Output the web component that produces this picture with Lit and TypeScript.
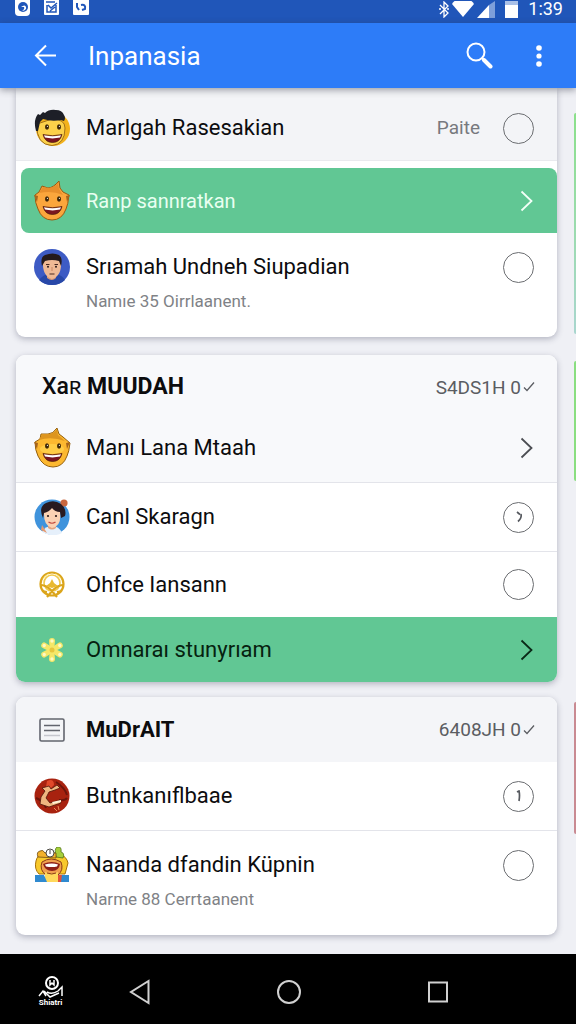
import { LitElement, html, svg, css, nothing, TemplateResult } from "lit";
import { customElement, property } from "lit/decorators.js";

const grin = svg`
  <ellipse cx="13" cy="18" rx="2" ry="2.700" fill="#3b2508"/>
  <ellipse cx="25" cy="18" rx="2" ry="2.700" fill="#3b2508"/>
  <circle cx="13.400" cy="17.300" r=".6" fill="#fff"/>
  <circle cx="25.400" cy="17.300" r=".6" fill="#fff"/>
  <path d="M9 25.500q9.500 2.500 19 0q-2 8-9.500 8t-9.500-8z" fill="#7a1620" stroke="#4a1a08" stroke-width=".7"/>
  <path d="M10 26.200q8.500 2 17 0l-1 2.400q-7.500 1.600-15 0z" fill="#fff"/>`;

const avatars: Record<string, TemplateResult> = {
  boy: html`<svg viewBox="0 0 36 38" width="36" height="38" aria-hidden="true">
    <circle cx="19" cy="20" r="17" fill="#f3b21c"/>
    <path d="M3 15q-1 21 15 21.500q13-1 13-17.500q0-9-13-9z" fill="#fcd14a" stroke="#8a5a10" stroke-width=".8"/>
    <path d="M2 22Q-1 11 4 5l2 1l3-3l2 1q4-4 11-3q6 0 8 5q2 3 0 6l-3-1q-9 2-18-1l-3 3l-2 9z" fill="#1d1f27"/>
    ${grin}</svg>`,
  amber: html`<svg viewBox="0 0 36 40" width="38" height="40" aria-hidden="true">
    <path d="M1 14l4-3l3-6l6 2q5 0 11-7l1 7l3 4l6 3q-1 10-3 14q-4 11-14 11T4 28Q1 22 1 14z" fill="#fba63c" stroke="#9b5a12" stroke-width="1"/>
    <path d="M5 12l4-6l6 1q6-1 9-5l1 6l4 6q-11-5-24-2z" fill="#e88f2c"/>
    <path d="M0 14l4 1l-1 6zM36 14l-4 1l1 6z" fill="#a7641c"/>
    ${grin}</svg>`,
  yellow: html`<svg viewBox="0 0 36 40" width="38" height="40" aria-hidden="true">
    <path d="M1 14l5-3l1-5l7 0q5 0 9-6l2 6l4 3l7 6q-1 9-3 13q-4 11-14 11T4 28Q1 22 1 14z" fill="#fcb830" stroke="#94600f" stroke-width="1"/>
    <path d="M5 12l3-6l6 0q6 0 9-5l1 6l7 6q-14-5-26-1z" fill="#dd951f"/>
    <path d="M0 14l4 1l-1 6zM36 14l-4 1l1 6z" fill="#a7641c"/>
    <ellipse cx="18" cy="21" rx="12" ry="5" fill="#ffcc45"/>
    ${grin}</svg>`,
  man: html`<svg viewBox="0 0 36 36" width="36" height="36" aria-hidden="true">
    <circle cx="18" cy="18" r="18" fill="#3d5bc4"/>
    <path d="M5 31q4-5 9-6h8q6 1 9 6q-5 5-13 5T5 31z" fill="#2848a8"/>
    <path d="M13 23h9v6q-4 4-9 0z" fill="#d99a78"/>
    <path d="M9 12q0-5 9-5t9 5q1 15-9 18Q8 27 9 12z" fill="#efb995"/>
    <path d="M8 17q-2-9 3-11q8-3 14 0q4 3 2 11l-2-5q-7-2-14 0z" fill="#241a1c"/>
    <path d="M12 15.500h3.500M20.500 15.500h3.500M15.500 25h5" stroke="#4a2a22" stroke-width="1.200"/>
    <circle cx="14" cy="17.700" r="1" fill="#2a1a1a"/><circle cx="22" cy="17.700" r="1" fill="#2a1a1a"/>
    <path d="M18 18v4" stroke="#c98765"/></svg>`,
  woman: html`<svg viewBox="0 0 36 36" width="36" height="36" aria-hidden="true">
    <circle cx="18" cy="18" r="17.500" fill="#3f93dc"/>
    <circle cx="30" cy="4" r="3.600" fill="#c9673f"/>
    <path d="M8 33q3-6 10-6t10 7q-9 5-20-1z" fill="#e6f0fb"/>
    <path d="M8 26l5 8l-6-3z" fill="#e59a70"/>
    <path d="M14 23h8v6q-4 3-8 0z" fill="#e2a37e"/>
    <path d="M10 12q8-7 16 0q2 15-8 17Q9 27 10 12z" fill="#fbd2b4"/>
    <path d="M9 19Q4 8 12 4q8-4 15 1q6 5 4 12l-4 2l-1-6q-5 0-8-4q-3 4-8 5z" fill="#281a20"/>
    <circle cx="14" cy="17" r="1.100" fill="#2a1a1a"/><circle cx="22" cy="17" r="1.100" fill="#2a1a1a"/>
    <path d="M14.500 23q3.500 2.500 7 0" stroke="#c2483c" fill="none" stroke-width="1.200"/></svg>`,
  emblem: html`<svg viewBox="0 0 28 28" width="28" height="28" aria-hidden="true">
    <g fill="none" stroke="#dba51b" stroke-width="2.200">
      <circle cx="14" cy="13" r="11.500"/>
      <circle cx="14" cy="12" r="8" stroke="#f0c94c" stroke-width="1.600"/>
      <path d="M2 14q6 0 11 5l6 7M26 14q-6 0-11 5l-6 7M4 20l5 1M24 20l-5 1"/></g>
    <path d="M14 8l2 4l4 3l-6 2l-6-2l4-3z" fill="#e9b92f"/>
    <path d="M5 8q2-4 6-5M23 8q-2-4-6-5" stroke="#fff0a0" fill="none"/></svg>`,
  flower: html`<svg viewBox="0 0 24 24" width="24" height="24" aria-hidden="true">
    ${[0, 60, 120, 180, 240, 300].map(a => svg`<g transform="rotate(${a} 12 12)">
      <path d="M12 13L9.500 8L9 3q0-3 3-3t3 3l-.5 5z" fill="#f6e768"/><circle cx="12" cy="3" r="1.700" fill="#fff9c4"/></g>`)}
    <circle cx="12" cy="12" r="2.500" fill="#e9c63d"/></svg>`,
  dancer: html`<svg viewBox="0 0 36 36" width="36" height="36" aria-hidden="true">
    <circle cx="18" cy="18" r="17.500" fill="#a8220f"/>
    <path d="M2 20q8 3 10 10M22 4q9 6 11 13M25 22q6 1 8-2" stroke="#6d150b" fill="none" stroke-width="2"/>
    <path d="M13 3q7-3 7 4l-3 3l-5-1z" fill="#e0492a"/>
    <path d="M8 10l7-2l2 3l6-4l3 3l-5 2l-6 2l-3 6l4 5l10-3l1 3l-12 4l-9-3l1-7l4-6z" fill="#efb680" stroke="#4e140a" stroke-width=".8"/>
    <path d="M18 24l9-2v2l-8 2z" fill="#fff2d8"/><path d="M20 30l3 3m1-5l1 4" stroke="#ef8a5a"/></svg>`,
  mascot: html`<svg viewBox="0 0 36 36" width="36" height="36" aria-hidden="true">
    <path d="M2 14Q3 8 10 6h15q8 4 9 10l-3 11H5Q0 22 2 14z" fill="#f8c92c" stroke="#a77008" stroke-width="1"/>
    <path d="M22 10q-2-8 1-10q5-1 4 5q4 1 2 6z" fill="#a6cf3a" stroke="#50731c" stroke-width=".8"/>
    <path d="M4 10q-2-5 2-6q3-2 5 2l11 0v5z" fill="#f3b12b" stroke="#6d4a10" stroke-width=".8"/>
    <circle cx="16" cy="6" r="4" fill="#fff" stroke="#4c4a44" stroke-width="1"/><path d="M16 3v4" stroke="#444"/>
    <path d="M8 15q9-6 19 0q3 8-3 13H12Q5 23 8 15z" fill="#f0a04e" stroke="#8b3a16" stroke-width="1"/>
    <path d="M9 17q9-4 17 0q-1 7-8 7T9 17z" fill="#8e2018"/><path d="M11 17.500q7-2 13 0l-1 2q-5 1-11 0z" fill="#fff"/>
    <path d="M11 25q7 3 13 0v10H11z" fill="#ffd95c"/><path d="M13 26q5 2 9 0" stroke="#8b3a16" fill="none"/>
    <path d="M1 28h9l3 7H1z" fill="#2f8ad0"/><path d="M27 28h8v7H24z" fill="#2f8ad0"/><path d="M24 28h4l-1 7h-3z" fill="#e0513a"/></svg>`,
  list: html`<svg viewBox="0 0 26 24" width="26" height="24" aria-hidden="true">
    <rect x="1" y="1" width="24" height="22" rx="1.500" fill="none" stroke="#62656e" stroke-width="1.600"/>
    <path d="M5 7.500h16M5 12.500h16" stroke="#62656e" stroke-width="1.700"/><path d="M5 17.500h16" stroke="#c5c7ce" stroke-width="1.500"/></svg>`,
};

const check = html`<svg viewBox="0 0 12 12" width="12" height="12" aria-hidden="true"><path d="M1 6.500l3 3l7-8" fill="none" stroke="currentColor" stroke-width="1.300"/></svg>`;

@customElement("list-row")
class ListRow extends LitElement {
  @property() avatar = "";
  @property() name = "";
  @property() sub = "";
  @property() note = "";
  @property() action: "pick" | "open" | "hint" | "one" = "pick";

  static styles = css`
    :host { display: block; color: #0c0c0e; }
    .row {
      display: grid; grid-template-columns: 36px 1fr auto; column-gap: 16px; align-items: center;
      box-sizing: border-box; width: 100%; min-height: var(--row-height, 65px); padding: 0 23px 0 var(--row-left, 18px);
      color: inherit; text-decoration: none; font-size: var(--row-text, 22px); line-height: 32px;
    }
    .tall { align-content: start; padding-top: 16px; padding-bottom: 24px; row-gap: 4px; grid-template-rows: 36px 24px; }
    .avatar { display: flex; align-items: center; justify-content: center; height: 36px; }
    .avatar svg { flex: none; }
    .end { display: flex; align-items: center; gap: 23px; }
    .note { font-size: 19px; color: #77797e; }
    .sub { grid-column: 2; font-size: 17px; line-height: 24px; color: #808286; }
    .ring {
      appearance: none; box-sizing: border-box; width: 31px; height: 31px; margin: 0; padding: 0;
      border: 1px solid #6b6d71; border-radius: 50%; background: none; color: #55585e;
      display: grid; place-items: center;
    }
    input.ring:checked { background: #61c794; }
    .chevron { display: block; margin-right: 1px; color: var(--chevron, #4c4e53); }
  `;

  render() {
    const head = html`<span class="avatar">${avatars[this.avatar]}</span>`;
    if (this.action === "open") {
      return html`<a class="row" href="#open">${head}<span>${this.name}</span>
        <svg class="chevron" viewBox="0 0 13 22" width="13" height="22" aria-hidden="true"><path d="M1.500 1.500l10 9.500l-10 9.500" fill="none" stroke="currentColor" stroke-width="1.800"/></svg></a>`;
    }
    const control = this.action === "pick"
      ? html`<input class="ring" id="pick" type="checkbox">`
      : html`<button class="ring" id="pick" aria-label="Info">${this.action === "hint"
          ? html`<svg viewBox="0 0 8 12" width="8" height="12"><path d="M2 1l3 2.500M6 3q1 4-3 7.500" fill="none" stroke="currentColor" stroke-width="1.700"/></svg>`
          : html`<svg viewBox="0 0 8 12" width="8" height="12"><path d="M2 2l2-1q1 4 0 10" fill="none" stroke="currentColor" stroke-width="1.700"/></svg>`}</button>`;
    return html`<div class="row ${this.sub ? "tall" : ""}">${head}
      <label for="pick">${this.name}</label>
      <span class="end">${this.note ? html`<span class="note">${this.note}</span>` : nothing}${control}</span>
      ${this.sub ? html`<span class="sub">${this.sub}</span>` : nothing}</div>`;
  }
}

@customElement("app-root")
class AppRoot extends LitElement {
  static styles = css`
    :host { display: flex; flex-direction: column; min-height: 100vh; background: #eff0f5; font-family: Roboto, "Liberation Sans", sans-serif; }
    button { border: 0; padding: 0; background: none; color: inherit; font: inherit; display: grid; place-items: center; }
    .status { display: flex; align-items: flex-start; justify-content: space-between; height: 23px; box-sizing: border-box; padding: 0 13px 0 15px; background: #2056b9; color: #fff; }
    .notes, .signals { display: flex; align-items: center; }
    .notes { gap: 14px; }
    .signals svg { margin-right: 2px; }
    .signals { height: 18px; }
    .time { font-size: 18px; line-height: 22px; margin-left: 6px; }
    .bar { position: relative; display: flex; align-items: center; height: 65px; padding: 0 23px 0 34px; background: #2d7cf8; color: #fff; box-shadow: 0 2px 7px rgba(40, 44, 60, .45); }
    .bar h1 { flex: 1; margin: 0 0 0 31px; font-size: 26px; line-height: 32px; font-weight: 400; }
    .more { margin-left: 32px; width: 28px; height: 40px; }
    main { flex: 1; display: flex; flex-direction: column; gap: 15px; padding: 0 0 18px 16px; }
    .deck { display: flex; gap: 17px; }
    .first { margin-bottom: 3px; }
    .card { flex: 1; border-radius: 9px; background: #fff; box-shadow: 0 2px 6px rgba(50, 54, 80, .32); overflow: hidden; }
    .first .card { border-radius: 0 0 9px 9px; }
    .peek { width: 2px; border-radius: 4px 0 0 4px; }
    .mint { margin: 25px 0 3px; background: linear-gradient(#8be08a, #a9d6cf); }
    .lime { margin-top: 6px; height: 120px; background: #8ade80; }
    .rose { margin-top: 5px; height: 132px; background: #c98a92; }
    .cut { padding-top: 8px; background: #f3f4f7; border-bottom: 1px solid #e9eaee; --row-height: 64px; }
    .chosen { margin: 7px 0 0 5px; border-radius: 8px 8px 0 8px; background: #61c794; color: #e9fff1; --row-left: 13px; --row-text: 20px; --chevron: #f2fff7; }
    .soft { background: #f8f9fb; }
    .lead { padding-bottom: 6px; --row-height: 57px; }
    .line { border-bottom: 1px solid #e3e4ea; }
    .mid { --row-height: 68px; }
    .go { background: #61c794; --chevron: #0b2a18; color: #06210f; }
    .head { display: flex; align-items: center; justify-content: space-between; height: 64px; padding: 0 22px 0 26px; }
    .tagged { padding-left: 23px; height: 65px; background: #f4f5f8; }
    .head h2 { display: flex; align-items: center; margin: 0; font-size: 23px; line-height: 32px; font-weight: 700; color: #0c0c0e; }
    .light { font-weight: 500; }
    .head.tagged h2 { gap: 21px; font-size: 22px; }
    .code { display: flex; align-items: center; gap: 2px; font-size: 19px; color: #5b5d62; }
    nav { display: grid; grid-template-columns: 29px repeat(3, 1fr); height: 70px; padding: 0 64px 0 36px; background: #000; color: #d0d0d0; place-items: center; }
    nav button { width: 48px; height: 48px; margin-top: 5px; }
    nav .brand { width: 32px; color: #fff; font-size: 8px; line-height: 8px; font-weight: 700; align-content: center; }
  `;

  render() {
    return html`
      <div class="status">
        <div class="notes">
          <svg viewBox="0 0 15 16" width="15" height="16"><rect y="-4" width="15" height="20" rx="4" fill="#fff"/><circle cx="8" cy="7" r="5" fill="#2056b9"/><path d="M6 7q4-3 5 0t-4 4q3-2 2-4z" fill="#fff"/></svg>
          <svg viewBox="0 0 15 16" width="15" height="16"><rect y="-2" width="15" height="17" rx="1" fill="#fff"/><path d="M2 2h9M3 5v7h9V5M4 5l3 3l6-5M6 11l5-4" stroke="#2056b9" stroke-width="1.500" fill="none"/></svg>
          <svg viewBox="0 0 16 16" width="16" height="16"><rect y="-2" width="16" height="17" rx="1" fill="#fff"/><path d="M4 3v4l2 3M8 5q5-1 4 4l-3 1" stroke="#2056b9" stroke-width="2" fill="none"/></svg>
        </div>
        <div class="signals">
          <svg viewBox="0 0 12 17" width="12" height="17"><path d="M2 4l8 8l-4 4V1l4 4l-8 8M1 8h2M9 8h2" stroke="#fff" fill="none" stroke-width="1.300"/></svg>
          <svg viewBox="0 0 22 16" width="22" height="16"><path d="M0 3Q2 0 4-1H18Q20 0 22 3L11 16z" fill="#fff"/></svg>
          <svg viewBox="0 0 20 17" width="20" height="17"><path d="M1 17L13 4v13z" fill="#fff"/><path d="M13 4l6-4v17h-6z" fill="#7e9fda"/></svg>
          <svg viewBox="0 0 22 17" width="22" height="17"><path d="M7 0h13v17H7z" fill="#fff"/><path d="M7 0h13v4H7z" fill="#a9c0e8"/></svg>
          <span class="time">1:39</span>
        </div>
      </div>
      <header class="bar">
        <button aria-label="Back"><svg viewBox="0 0 23 23" width="23" height="23"><path d="M12 1.500L2 11.500l10 10M2 11.500h20" fill="none" stroke="#fff" stroke-width="2"/></svg></button>
        <h1>Inpanasia</h1>
        <button aria-label="Search"><svg viewBox="0 0 27 27" width="27" height="27"><circle cx="10" cy="10" r="8.500" fill="none" stroke="#fff" stroke-width="2"/><path d="M16 16l3 2" stroke="#fff" stroke-width="2"/><path d="M18 18l6.500 6.500" stroke="#fff" stroke-width="4" stroke-linecap="round"/></svg></button>
        <button class="more" aria-label="More"><svg viewBox="0 0 6 24" width="6" height="24"><circle cx="3" cy="4" r="2.800" fill="#fff"/><circle cx="3" cy="12" r="2.600" fill="#fff"/><circle cx="3" cy="20" r="2.800" fill="#fff"/></svg></button>
      </header>
      <main>
        <div class="deck first">
          <section class="card">
            <list-row class="cut" avatar="boy" name="Marlgah Rasesakian" note="Paite"></list-row>
            <list-row class="chosen" avatar="amber" name="Ranp sannratkan" action="open"></list-row>
            <list-row avatar="man" name="Srıamah Undneh Siupadian" sub="Namıe 35 Oirrlaanent."></list-row>
          </section>
          <div class="peek mint"></div>
        </div>
        <div class="deck">
          <section class="card">
            <div class="head soft"><h2><span><span class="light">Xaʀ</span> MUUDAH</span></h2><span class="code">S4DS1H 0${check}</span></div>
            <list-row class="soft lead line" avatar="yellow" name="Manı Lana Mtaah" action="open"></list-row>
            <list-row class="mid line" avatar="woman" name="Canl Skaragn" action="hint"></list-row>
            <list-row avatar="emblem" name="Ohfce Iansann"></list-row>
            <list-row class="go" avatar="flower" name="Omnaraı stunyrıam" action="open"></list-row>
          </section>
          <div class="peek lime"></div>
        </div>
        <div class="deck">
          <section class="card">
            <div class="head tagged"><h2>${avatars.list}<span>MuDrAIT</span></h2><span class="code">6408JH 0${check}</span></div>
            <list-row class="mid line" avatar="dancer" name="Butnkanıflbaae" action="one"></list-row>
            <list-row avatar="mascot" name="Naanda dfandin Küpnin" sub="Narme 88 Cerrtaanent"></list-row>
          </section>
          <div class="peek rose"></div>
        </div>
      </main>
      <nav>
        <button class="brand"><svg viewBox="0 0 30 23" width="30" height="23"><g fill="none" stroke="#fff"><ellipse cx="16" cy="7" rx="6" ry="6" stroke-width="2"/><path d="M14 4v5l2-2l2 2V4M3 20l4-5l3 5M11 16q5 3 11-1l4-4v9M8 15l6 6l9-4" stroke-width="1.500"/></g></svg><span>Shiatri</span></button>
        <button aria-label="Back"><svg viewBox="0 0 22 26" width="22" height="26"><path d="M19.500 2v22L2 13z" fill="none" stroke="currentColor" stroke-width="2"/></svg></button>
        <button aria-label="Home"><svg viewBox="0 0 26 26" width="26" height="26"><circle cx="13" cy="13" r="11" fill="none" stroke="currentColor" stroke-width="2"/></svg></button>
        <button aria-label="Recent"><svg viewBox="0 0 22 22" width="22" height="22"><rect x="2" y="1.500" width="18" height="19" fill="none" stroke="currentColor" stroke-width="2"/></svg></button>
      </nav>`;
  }
}
